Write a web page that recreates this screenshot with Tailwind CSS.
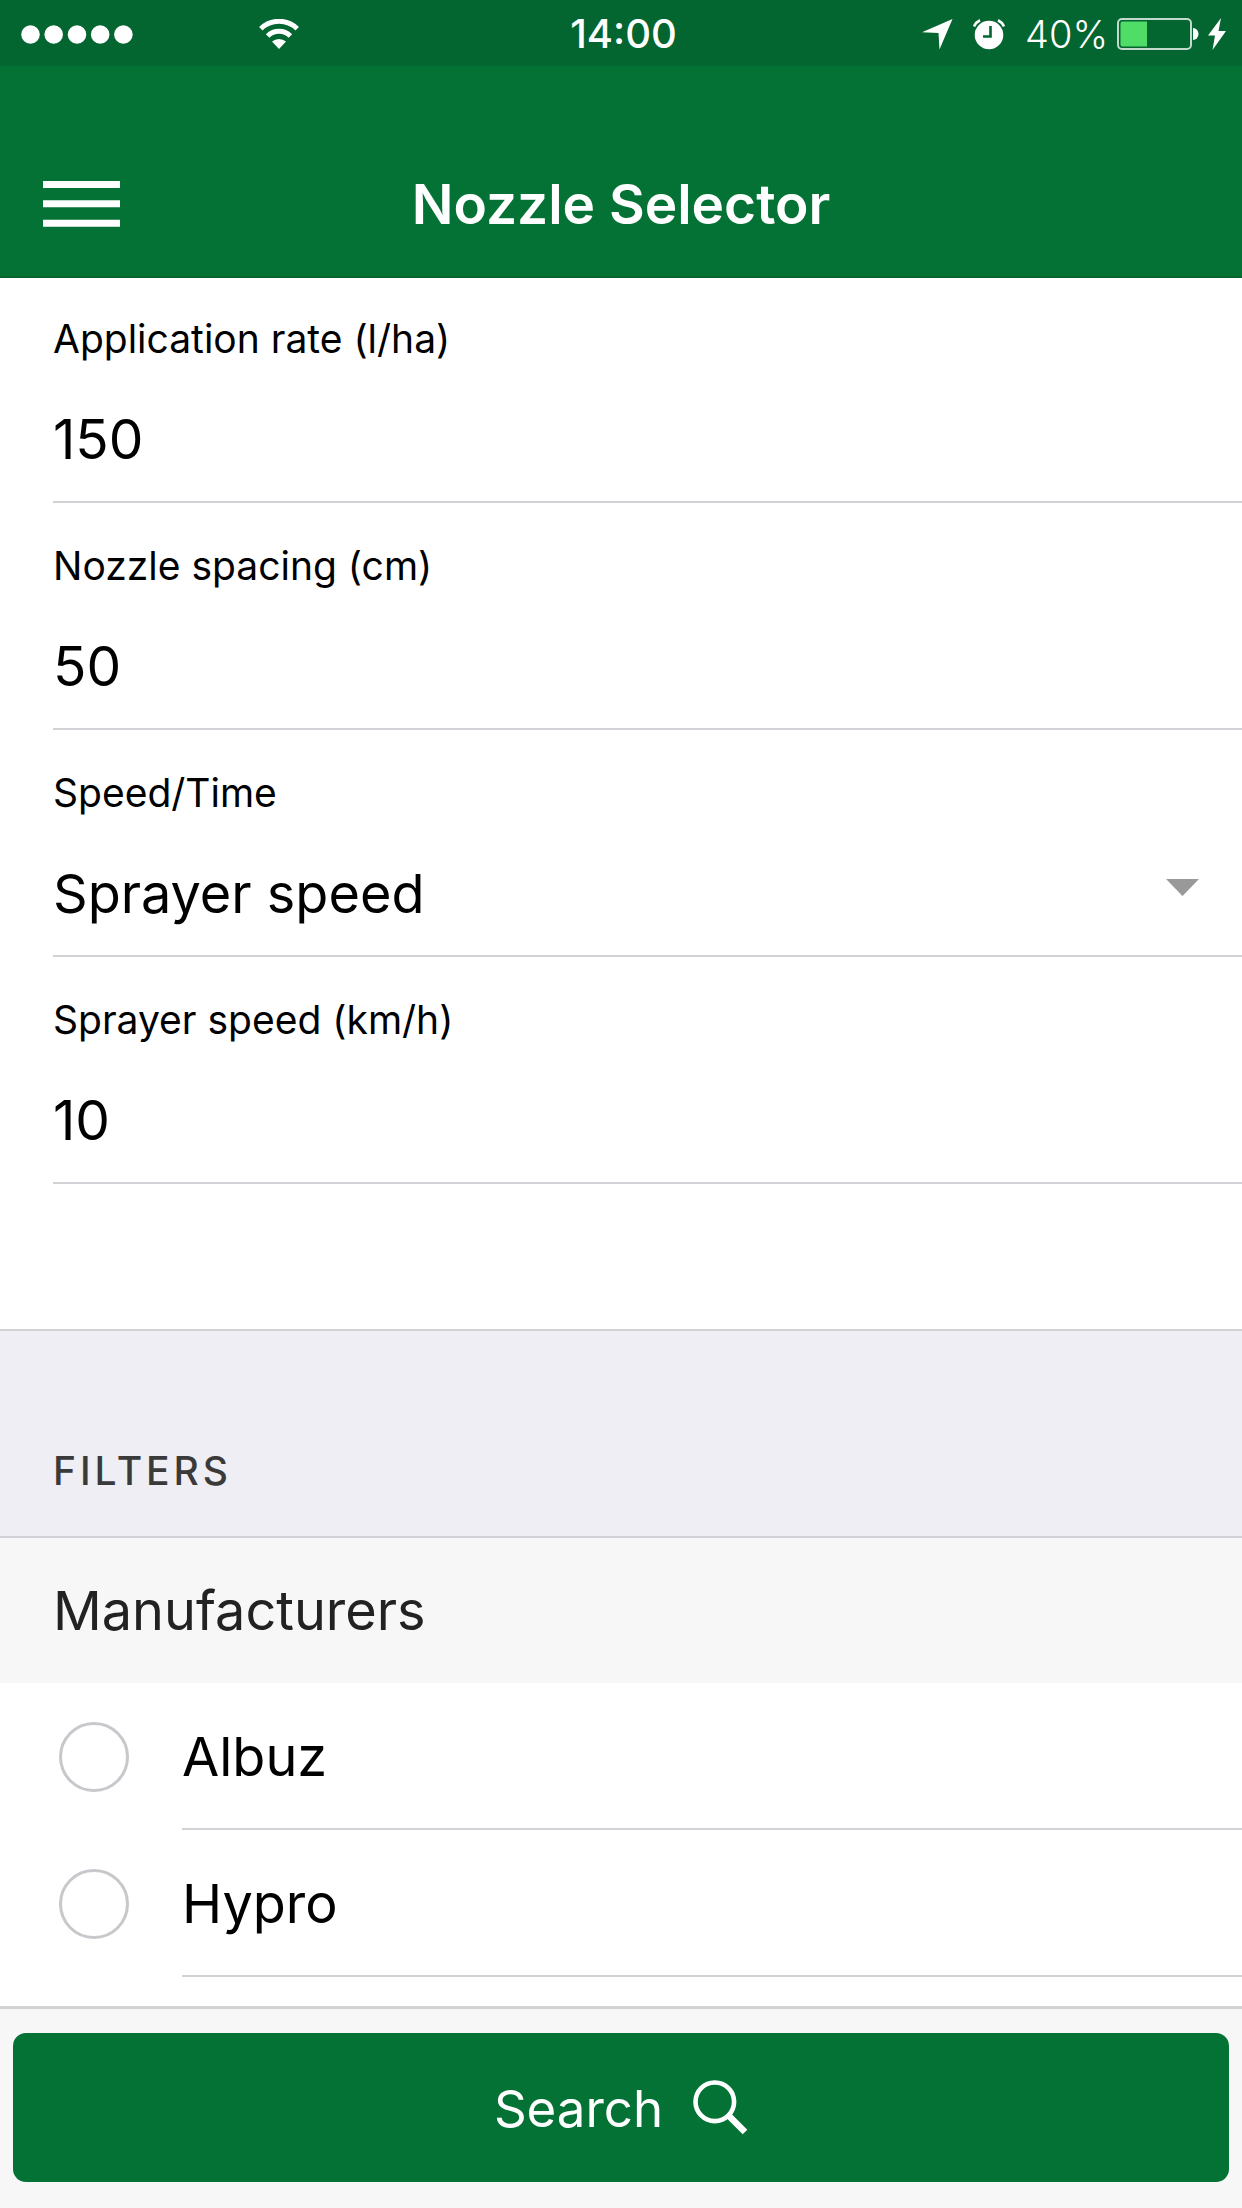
<!DOCTYPE html>
<html lang="en">
<head>
  <meta charset="UTF-8" />
  <meta name="viewport" content="width=device-width, initial-scale=1.0" />
  <title>Nozzle Selector</title>
  <script src="https://cdn.jsdelivr.net/npm/@tailwindcss/browser@4"></script>
</head>
<body class="flex min-h-screen flex-col bg-white font-['Inter',sans-serif] text-black">

  <!-- Status bar -->
  <div class="grid h-[66px] grid-cols-[1fr_auto_1fr] items-center bg-[#03652f] pt-0.5 pr-4 pl-[21px] text-[40px] text-white">
    <div class="flex items-center">
      <svg class="h-[19px] w-28" viewBox="0 0 112 19" fill="currentColor" aria-hidden="true">
        <circle cx="9.5" cy="9.5" r="9.3" /><circle cx="32.7" cy="9.5" r="9.3" /><circle cx="56" cy="9.5" r="9.3" /><circle cx="79.2" cy="9.5" r="9.3" /><circle cx="102.4" cy="9.5" r="9.3" />
      </svg>
      <svg class="ml-[126px] h-[30px] w-10" viewBox="0 0 40 30" fill="none" stroke="currentColor" stroke-width="5" aria-hidden="true">
        <path d="M1.8 9.7 A26 26 0 0 1 38.2 9.7" />
        <path d="M8.6 17 A16.3 16.3 0 0 1 31.4 17" />
        <path d="M20 30 L13 22.6 A10.5 10.5 0 0 1 27 22.6 Z" fill="currentColor" stroke="none" />
      </svg>
    </div>
    <span class="font-medium">14:00</span>
    <div class="flex items-center justify-end">
      <svg class="h-[31px] w-[31px]" viewBox="0 0 31 31" fill="currentColor" aria-hidden="true">
        <path d="M30.5 0 L17.5 30.5 L16.5 14 L0 13.2 Z" />
      </svg>
      <svg class="ml-5 h-[31px] w-8" viewBox="0 0 32 31" fill="none" stroke="currentColor" aria-hidden="true">
        <circle cx="16" cy="16" r="14.3" fill="currentColor" stroke="none" />
        <path d="M1 7.5 A12 12 0 0 1 7 1.2 M31 7.5 A12 12 0 0 0 25 1.2" stroke-width="2.6" />
        <path d="M17.5 7 V17.5 H10" stroke="#03652f" stroke-width="2.6" />
      </svg>
      <span class="ml-5 text-[38px] font-light">40%</span>
      <svg class="ml-[9px] h-8 w-[82px]" viewBox="0 0 82 32" aria-hidden="true">
        <rect x="1" y="1" width="73" height="30" rx="4" fill="none" stroke="#c3d9cb" stroke-width="2" />
        <path d="M5.5 3.5 H30 V28.5 H5.5 A2 2 0 0 1 3.5 26.5 V5.5 A2 2 0 0 1 5.5 3.5 Z" fill="#4fdd67" />
        <path d="M76 10 A5.5 6 0 0 1 76 22 Z" fill="#fff" />
      </svg>
      <svg class="ml-[9px] h-8 w-[18px]" viewBox="0 0 18 32" fill="currentColor" aria-hidden="true">
        <path d="M13 0 L0 17.5 H7 L4.5 32 L18 13 H10.5 Z" />
      </svg>
    </div>
  </div>

  <!-- Title bar -->
  <header class="grid h-[212px] grid-cols-[1fr_auto_1fr] items-center border-b-2 border-[#03652f] bg-[#047235] px-[43px] pt-[66px] text-white">
    <button type="button" aria-label="Menu" class="w-[77px]">
      <svg class="h-[46px] w-[77px]" viewBox="0 0 77 46" fill="currentColor" aria-hidden="true">
        <path d="M0 0 H77 V7 H0 Z M0 19.3 H77 V26.3 H0 Z M0 38.7 H77 V45.7 H0 Z" />
      </svg>
    </button>
    <h1 class="text-[55px] font-semibold">Nozzle Selector</h1>
  </header>

  <main class="flex-1">
    <form id="nozzleForm" class="pb-[145px] pl-[53px]">
      <div class="flex h-[225px] flex-col border-b-2 border-[#d2d2d6] pt-9">
        <label for="rate" class="text-[39px] leading-[50px]">Application rate (l/ha)</label>
        <input id="rate" type="text" inputmode="decimal" value="150" class="mt-[35px] h-[80px] w-full text-[55px] outline-none" />
      </div>
      <div class="flex h-[227px] flex-col border-b-2 border-[#d2d2d6] pt-[38px]">
        <label for="spacing" class="text-[39px] leading-[50px]">Nozzle spacing (cm)</label>
        <input id="spacing" type="text" inputmode="decimal" value="50" class="mt-[35px] h-[80px] w-full text-[55px] outline-none" />
      </div>
      <div class="relative flex h-[227px] flex-col border-b-2 border-[#d2d2d6] pt-[38px]">
        <label for="mode" class="text-[39px] leading-[50px]">Speed/Time</label>
        <select id="mode" class="mt-[35px] h-[80px] w-full appearance-none text-[54px] outline-none">
          <option>Sprayer speed</option>
        </select>
        <svg class="pointer-events-none absolute top-[149px] right-[43px] h-[17px] w-[33px]" viewBox="0 0 33 17" fill="#999" aria-hidden="true">
          <path d="M0 0 H33 L16.5 17 Z" />
        </svg>
      </div>
      <div class="flex h-[227px] flex-col border-b-2 border-[#d2d2d6] pt-[38px]">
        <label for="speed" class="text-[39px] leading-[50px]">Sprayer speed (km/h)</label>
        <input id="speed" type="text" inputmode="decimal" value="10" class="mt-[35px] h-[80px] w-full text-[55px] outline-none" />
      </div>
    </form>

    <section>
      <h2 class="h-[209px] border-y-2 border-[#d2d2d6] bg-[#efeef4] pt-[115px] pl-[53px] text-[39px] leading-[50px] font-medium tracking-widest text-[#3a3a3a]">FILTERS</h2>
      <h3 class="flex h-[145px] items-center bg-[#f7f7f7] pl-[53px] text-[54px] text-[#222]">Manufacturers</h3>
      <ul>
        <li class="flex h-[147px] items-center pl-[59px]">
          <input id="albuz" type="checkbox" class="size-[70px] shrink-0 appearance-none rounded-full border-3 border-[#c7c7cc] checked:bg-[#047235]" />
          <label for="albuz" class="ml-[53px] flex h-full flex-1 items-center border-b-2 border-[#d2d2d6] pt-0.5 text-[54px]">Albuz</label>
        </li>
        <li class="flex h-[147px] items-center pl-[59px]">
          <input id="hypro" type="checkbox" class="size-[70px] shrink-0 appearance-none rounded-full border-3 border-[#c7c7cc] checked:bg-[#047235]" />
          <label for="hypro" class="ml-[53px] flex h-full flex-1 items-center border-b-2 border-[#d2d2d6] pt-0.5 text-[54px]">Hypro</label>
        </li>
      </ul>
    </section>
  </main>

  <footer class="sticky bottom-0 border-t-3 border-[#d2d2d2] bg-[#f7f7f7] px-[13px] pt-6 pb-[26px]">
    <button type="submit" form="nozzleForm" class="flex h-[149px] w-full items-center justify-center gap-[30px] rounded-[13px] bg-[#047235] text-[51px] text-white">
      <span class="pt-1">Search</span>
      <svg class="h-[55px] w-[55px]" viewBox="0 0 55 55" fill="none" stroke="currentColor" stroke-width="4.6" aria-hidden="true">
        <circle cx="21.8" cy="21.8" r="19.3" />
        <path d="M35.5 35.5 L52 52" stroke-width="6.5" />
      </svg>
    </button>
  </footer>

</body>
</html>
